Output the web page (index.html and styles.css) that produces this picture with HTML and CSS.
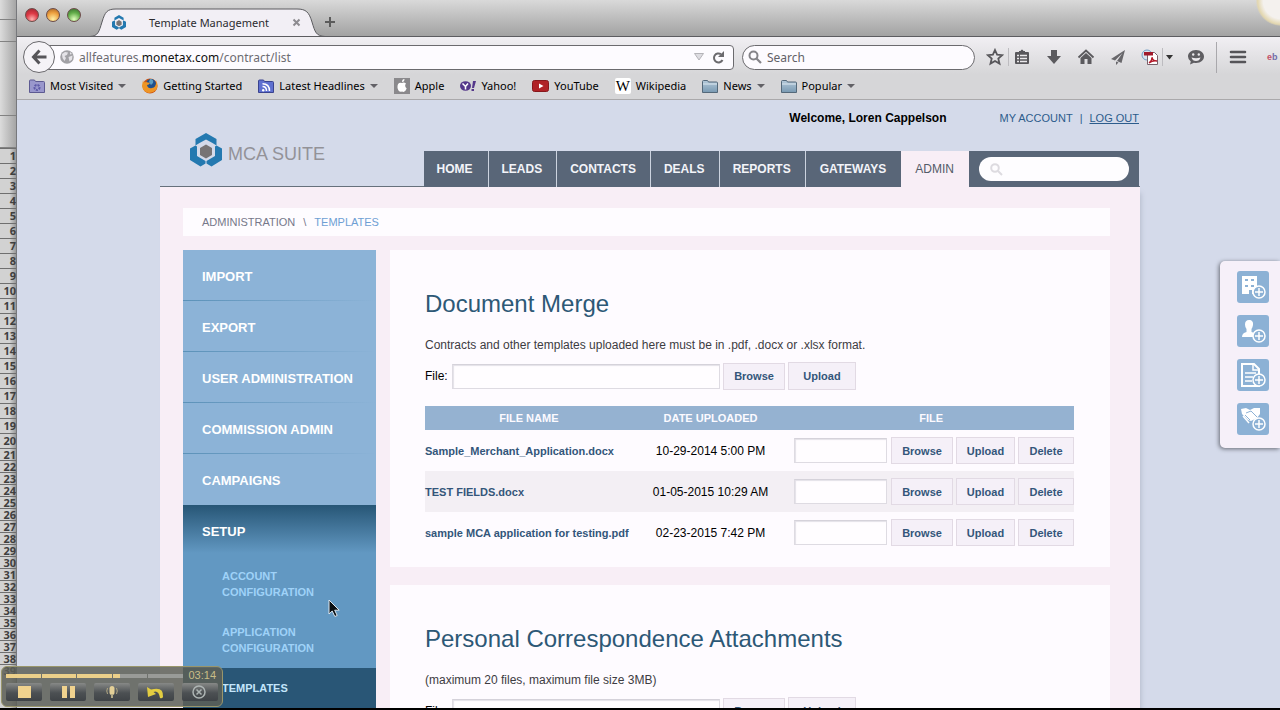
FILE: index.html
```
<!DOCTYPE html>
<html lang="en">
<head>
<meta charset="utf-8">
<title>Template Management</title>
<link rel="stylesheet" href="styles.css">
</head>
<body>
<svg class="defs" width="0" height="0" aria-hidden="true">
  <defs>
    <linearGradient id="folderFill" x1="0" y1="0" x2="0" y2="1"><stop offset="0" stop-color="#b4c9d9"/><stop offset="1" stop-color="#7899b2"/></linearGradient>
    <symbol id="logo" viewBox="0 0 32 34">
      <path fill="#2479b0" d="M16 0 26.500 6v6.500L22.500 10 16 6.500 9.500 10 5.500 12.500V6z"/>
      <path fill="#2479b0" d="M5.500 12.500 7 13.500V23l8.500 5v2.500L10.500 33.500 0 27V15.500z"/>
      <path fill="#2479b0" d="M26.500 12.500 25 13.500V23l-8.500 5v2.500L21.500 33.500 32 27V15.500z"/>
      <path fill="#777475" d="M16 11.500 22 15v7l-6 3.500L10 22v-7z"/>
    </symbol>
    <symbol id="folder" viewBox="0 0 16 15"><path d="M.5 13.500V2.500q0-1 1-1h4l1 1.500h8q1 0 1 1v9.500z" fill="url(#folderFill)" stroke="#54697a"/><path d="M1 5h14" stroke="#dbe7ef"/></symbol>
    <symbol id="plus" viewBox="0 0 14 14"><circle cx="7" cy="7" r="6" fill="#8cb1d5" stroke="#fff" stroke-width="1.500"/><path d="M7 3v8M3 7h8" stroke="#fff" stroke-width="1.500"/></symbol>
  </defs>
</svg>
<div class="screen">
  <aside class="sheet" aria-hidden="true">
    <div class="sheet-top"><i></i><i></i><i></i><i></i></div>
    <ol class="rows"><li>1</li><li>2</li><li>3</li><li>4</li><li>5</li><li>6</li><li>7</li><li>8</li><li>9</li><li>10</li><li>11</li><li>12</li><li>13</li><li>14</li><li>15</li><li>16</li><li>17</li><li>18</li><li>19</li><li>20</li></ol>
    <ol class="rows tight"><li>21</li><li>22</li><li>23</li><li>24</li><li>25</li><li>26</li><li>27</li><li>28</li><li>29</li><li>30</li><li>31</li><li>32</li><li>33</li><li>34</li><li>35</li><li>36</li><li>37</li><li>38</li><li>39</li></ol>
  </aside>

  <div class="window">
    <div class="tabstrip">
      <div class="lights"><button class="light red" aria-label="Close window"></button><button class="light amber" aria-label="Minimize"></button><button class="light green" aria-label="Zoom"></button></div>
      <div class="tab">
        <svg class="tab-shape" viewBox="0 0 235 29" preserveAspectRatio="none"><path d="M0 28.500C8 28 9 24 12 14S17 1 26 1H207c9 0 12 3 15 13s4 14 13 14.500z" fill="#f2eff5" stroke="#5c5c60"/></svg>
        <svg class="tab-icon" width="14" height="15"><use href="#logo"/></svg>
        <span class="tab-title">Template Management</span>
        <button class="icon tab-close" aria-label="Close tab"><svg width="9" height="9" viewBox="0 0 9 9"><path d="M1.500 1.500l6 6M7.500 1.500l-6 6" stroke="#8d8b90" stroke-width="2"/></svg></button>
      </div>
      <button class="icon" aria-label="New tab"><svg width="12" height="12" viewBox="0 0 12 12"><path d="M6 1v10M1 6h10" stroke="#5c5c5c" stroke-width="2"/></svg></button>
      <span class="orb"></span>
    </div>

    <div class="chrome">
      <div class="toolbar">
        <button class="icon back" aria-label="Back"><svg width="16" height="16" viewBox="0 0 16 16" fill="none" stroke="#565559" stroke-width="3"><path d="M8.500 1.500 2.500 8l6 6.500M3 8h12.500"/></svg></button>
        <div class="url">
          <svg width="14" height="14" viewBox="0 0 14 14"><circle cx="7" cy="7" r="6.800" fill="#a2a1a6"/><path d="M2 4l3-2 3 .5L7 5 4.500 6 6 8l-1.500 3-2-3zM8.500 7l4-1.500-.5 4-2.500 2zM10 2l2 2-2 .5z" fill="#e5e3e8"/></svg>
          <span class="address" role="textbox" aria-label="Address">allfeatures.<b>monetax.com</b>/contract/list</span>
          <svg width="10" height="8" viewBox="0 0 10 8"><path d="M.5.5h9L5 7z" fill="#dddce1" stroke="#b4b3b8"/></svg>
          <button class="icon" aria-label="Reload"><svg width="13" height="13" viewBox="0 0 13 13"><path d="M10.500 9A4.500 4.500 0 1 1 9 3.200" fill="none" stroke="#6b6a6e" stroke-width="2"/><path d="M12 0v6H6z" fill="#6b6a6e"/></svg></button>
        </div>
        <label class="find"><svg width="14" height="14" viewBox="0 0 14 14" fill="none" stroke="#858489" stroke-width="2"><circle cx="5.500" cy="5.500" r="4"/><path d="M8.500 8.500l4.500 4.500" stroke-width="2.200"/></svg><input type="search" placeholder="Search" aria-label="Search the web"></label>
        <div class="tools">
          <span class="pair"><button class="icon" aria-label="Bookmark"><svg width="18" height="18" viewBox="0 0 18 18"><path d="M9 2l2.100 4.700 5.100.5-3.900 3.400 1.200 5L9 13l-4.500 2.600 1.200-5-3.900-3.400 5.100-.5z" fill="none" stroke="#58575b" stroke-width="1.800"/></svg></button>
          <i class="rule"></i>
          <button class="icon" aria-label="Bookmarks list"><svg width="18" height="18" viewBox="0 0 18 18"><path d="M3 4h12q1 0 1 1v10q0 1-1 1H3q-1 0-1-1V5q0-1 1-1z" fill="#58575b"/><path d="M6 5V3h1.500Q9 0 10.500 3H12v2z" fill="#58575b"/><path d="M4 7.500h2M4 10.500h2M4 13.500h2M7 7.500h7M7 10.500h7M7 13.500h7" stroke="#ebe9ec" stroke-width="1.700"/></svg></button></span>
          <button class="icon" aria-label="Downloads"><svg width="18" height="18" viewBox="0 0 18 18"><path d="M6 2h6v6h4l-7 8-7-8h4z" fill="#5b5a5e"/></svg></button>
          <button class="icon" aria-label="Home"><svg width="18" height="18" viewBox="0 0 18 18"><path d="M1.500 9.500 9 2.500l7.500 7" fill="none" stroke="#5b5a5e" stroke-width="1.800"/><path d="M9 5l5.500 5v6h-4v-5h-3v5h-4v-6z" fill="#5b5a5e"/></svg></button>
          <button class="icon" aria-label="Share"><svg width="18" height="18" viewBox="0 0 18 18"><path d="M16 2 2 11l4 1.500L13.500 5 8 13l4.500 2zM7 13.500V17l2.500-2.500z" fill="#68676b"/></svg></button>
          <span class="pair tightpair"><button class="icon" aria-label="Convert to PDF"><svg width="18" height="18" viewBox="0 0 18 18"><circle cx="6" cy="7" r="5" fill="#d9e3ee" stroke="#6f9cc6"/><path d="M6.500 4.500h7l3 3v9h-10z" fill="#fff" stroke="#77606a"/><path d="M3 4h9v3.500H3z" fill="#a01a2c"/><path d="M8 15q3.500-3 3-6 .5 4 5 4-4-1-8 2z" fill="none" stroke="#b3192a" stroke-width="1.300"/></svg></button>
          <i class="rule"></i>
          <button class="icon" aria-label="PDF options"><svg width="7" height="5" viewBox="0 0 7 5"><path d="M0 0h7L3.500 4.500z" fill="#333"/></svg></button></span>
          <button class="icon" aria-label="Chat"><svg width="18" height="18" viewBox="0 0 18 18"><path d="M9 2c5 0 8 3 8 6.500S14 15 9 15q-1 0-2-.2L3 16.500l.8-3Q1 11.500 1 8.500C1 5 4 2 9 2z" fill="#5f5e62"/><circle cx="6.200" cy="6.500" r="1.200" fill="#eceaed"/><circle cx="11.800" cy="6.500" r="1.200" fill="#eceaed"/><path d="M4.500 9.500q4.500 1.500 9 0-1 3.500-4.500 3.500t-4.500-3.500z" fill="#eceaed"/></svg></button>
          <button class="icon menu" aria-label="Menu"><svg width="18" height="14" viewBox="0 0 18 14"><path d="M2 2h14M2 7h14M2 12h14" stroke="#565559" stroke-width="2.600" stroke-linecap="round"/></svg></button>
          <span class="ebay"><span>e</span>b</span>
        </div>
      </div>
      <nav class="bookmarks" aria-label="Bookmarks">
        <a href="#"><svg width="16" height="15" viewBox="0 0 16 15"><path d="M.5 13.500V2q0-1 1-1h4l1 1.500h8q1 0 1 1v10z" fill="#9997cc" stroke="#5d5a92"/><circle cx="8" cy="8.500" r="2.500" fill="none" stroke="#5e5aa8" stroke-width="2" stroke-dasharray="2 1"/></svg>Most Visited<i class="caret"></i></a>
        <a href="#"><svg width="16" height="16" viewBox="0 0 16 16"><circle cx="8" cy="8" r="7.500" fill="#cd5312"/><circle cx="9" cy="6" r="5" fill="#20518d"/><path d="M8 1q4 0 3 4l-2 2-2-3z" fill="#5c9ec2"/><path d="M1 2q0 3 3 2l4 1q-1 2-3 2 1 4 5 3 5-1 4-8 3 6 0 10-3 3-7 3-6-1-7-7z" fill="#ee9525"/></svg>Getting Started</a>
        <a href="#"><svg width="16" height="15" viewBox="0 0 16 15"><path d="M.5 13.500V2q0-1 1-1h4l1 1.500h8q1 0 1 1v10z" fill="#5f70d0" stroke="#3a438f"/><path d="M4.500 7.500q4 0 4 4.500M4.500 4.700q7 0 7 7.300" fill="none" stroke="#fff" stroke-width="1.500"/><circle cx="5.200" cy="11.200" r="1.200" fill="#fff"/></svg>Latest Headlines<i class="caret"></i></a>
        <a href="#"><svg width="16" height="16" viewBox="0 0 16 16"><path d="M0 0h16v16H0z" fill="#8a898c"/><path d="M8 5q2-1 4 .5-2 2.500.7 5Q11 15 8 13.500 5 15 3.500 10 3 4 8 5zM8 4q0-3 2.500-3Q10.500 4 8 4z" fill="#fff"/></svg>Apple</a>
        <a href="#"><svg width="16" height="12" viewBox="0 0 16 12"><ellipse cx="5.500" cy="6" rx="5.500" ry="4.800" fill="#54378a"/><path d="M2.500 3.500l3 3 2.500-3M5.500 6V9.500" fill="none" stroke="#fff" stroke-width="1.500"/><path d="M13 1h3l-2 7h-2zM11.500 9H14v2h-2.500z" fill="#54378a"/></svg>Yahoo!</a>
        <a href="#"><svg width="17" height="12" viewBox="0 0 17 12"><rect x=".5" y=".5" width="16" height="11" rx="2" fill="#b02226" stroke="#86181c"/><path d="M7 3.500v5L11.500 6z" fill="#fff"/></svg>YouTube</a>
        <a href="#"><span class="w">W</span>Wikipedia</a>
        <a href="#"><svg width="16" height="15"><use href="#folder"/></svg>News<i class="caret"></i></a>
        <a href="#"><svg width="16" height="15"><use href="#folder"/></svg>Popular<i class="caret"></i></a>
      </nav>
    </div>

    <div class="page">
      <div class="site">
        <header class="site-head">
          <a class="brand" href="#"><svg width="32" height="34"><use href="#logo"/></svg><span>MCA SUITE</span></a>
          <div class="head-right">
            <div class="user"><strong>Welcome, Loren Cappelson</strong><a href="#">MY ACCOUNT</a><span>|</span><a class="out" href="#">LOG OUT</a></div>
            <nav class="main-nav" aria-label="Main">
              <a class="wide" href="#">HOME</a><a href="#">LEADS</a><a href="#">CONTACTS</a><a href="#">DEALS</a><a href="#">REPORTS</a><a class="last" href="#">GATEWAYS</a><a class="active" href="#">ADMIN</a>
              <div class="nav-search"><label><svg width="13" height="13" viewBox="0 0 13 13" fill="none" stroke="#dddbe0" stroke-width="2"><circle cx="5" cy="5" r="3.800"/><path d="M8 8l4 4"/></svg><input type="text" aria-label="Search site"></label></div>
            </nav>
          </div>
        </header>
        <div class="body">
          <nav class="crumbs" aria-label="Breadcrumb"><a href="#">ADMINISTRATION</a><span>\</span><a class="here" href="#">TEMPLATES</a></nav>
          <div class="columns">
            <nav class="side" aria-label="Administration">
              <a class="top" href="#">IMPORT</a>
              <a class="top" href="#">EXPORT</a>
              <a class="top" href="#">USER ADMINISTRATION</a>
              <a class="top" href="#">COMMISSION ADMIN</a>
              <a class="top" href="#">CAMPAIGNS</a>
              <div class="setup">
                <a class="top" href="#">SETUP</a>
                <a class="sub" href="#">ACCOUNT<br>CONFIGURATION</a>
                <a class="sub" href="#">APPLICATION<br>CONFIGURATION</a>
                <a class="sub current" href="#">TEMPLATES</a>
              </div>
            </nav>
            <main class="panels">
              <section class="panel">
                <h1>Document Merge</h1>
                <p>Contracts and other templates uploaded here must be in .pdf, .docx or .xlsx format.</p>
                <form class="upload"><label for="f1">File:</label><input id="f1" type="text"><button type="button">Browse</button><button class="send" type="button">Upload</button></form>
                <table>
                  <colgroup><col class="c-name"><col class="c-date"><col class="c-file"></colgroup>
                  <thead><tr><th>FILE NAME</th><th>DATE UPLOADED</th><th>FILE</th></tr></thead>
                  <tbody>
                    <tr><td><a href="#">Sample_Merchant_Application.docx</a></td><td class="date">10-29-2014 5:00 PM</td><td><div class="actions"><input type="text" aria-label="Replacement file 1"><button>Browse</button><button>Upload</button><button>Delete</button></div></td></tr>
                    <tr><td><a href="#">TEST FIELDS.docx</a></td><td class="date">01-05-2015 10:29 AM</td><td><div class="actions"><input type="text" aria-label="Replacement file 2"><button>Browse</button><button>Upload</button><button>Delete</button></div></td></tr>
                    <tr><td><a href="#">sample MCA application for testing.pdf</a></td><td class="date">02-23-2015 7:42 PM</td><td><div class="actions"><input type="text" aria-label="Replacement file 3"><button>Browse</button><button>Upload</button><button>Delete</button></div></td></tr>
                  </tbody>
                </table>
              </section>
              <section class="panel">
                <h1>Personal Correspondence Attachments</h1>
                <p>(maximum 20 files, maximum file size 3MB)</p>
                <form class="upload"><label for="f2">File:</label><input id="f2" type="text"><button type="button">Browse</button><button class="send" type="button">Upload</button></form>
              </section>
            </main>
          </div>
        </div>
      </div>
    </div>

    <div class="quick">
      <button aria-label="Add company"><svg width="32" height="32" viewBox="0 0 32 32"><path d="M5 5h15v18h-5v-4h-3v4H5z" fill="#fff"/><path d="M8 9h3M14 9h3M8 15h3M14 15h3" stroke="#8cb1d5" stroke-width="2"/><use href="#plus" x="15" y="14" width="14" height="14"/></svg></button>
      <button aria-label="Add contact"><svg width="32" height="32" viewBox="0 0 32 32"><path d="M12 5c3 0 4.500 2 4 5-.3 2-1 3-1.500 4v3q5 1 6 5H5q0-4 4.500-5v-3Q8 12 8 9.500 8 5 12 5z" fill="#fff"/><use href="#plus" x="15" y="14" width="14" height="14"/></svg></button>
      <button aria-label="Add document"><svg width="32" height="32" viewBox="0 0 32 32" fill="none" stroke="#fff"><path d="M5 5h12l5 5v17H5z" stroke-width="2"/><path d="M16 5v6h6" stroke-width="1.500"/><path d="M8 14h11M8 18h8M8 22h7" stroke-width="1.500"/><use href="#plus" x="15" y="14" width="14" height="14"/></svg></button>
      <button aria-label="Add deal"><svg width="32" height="32" viewBox="0 0 32 32"><path d="M4 6l5-1 4 2 4-2h6v6l-3 4-6 3-3-1-6-6z" fill="#fff"/><path d="M9 10l5-2 6 6M8 12l5 5M6 13l5 5" fill="none" stroke="#8cb1d5"/><path d="M6 13l6 7" stroke="#fff" stroke-width="1.500"/><use href="#plus" x="15" y="14" width="14" height="14"/></svg></button>
    </div>
  </div>
</div>
<svg class="pointer" width="13" height="20" viewBox="0 0 13 20"><path d="M1 1v14l3.200-3 2.600 5.500 2.400-1L6.700 11.200h4.500z" fill="#0b1014" stroke="#dde6ee"/></svg>
<div class="recorder">
  <div class="meter"><div class="track"><i class="on"></i><i class="on"></i><i class="on"></i><i class="part"></i><i></i></div><time>03:14</time></div>
  <div class="keys">
    <button aria-label="Stop"><svg width="36" height="18" viewBox="0 0 36 18"><path d="M12 3h13v12H12z" fill="#f0d28e"/></svg></button>
    <button aria-label="Pause"><svg width="36" height="18" viewBox="0 0 36 18"><path d="M12 3h5v12h-5zM20 3h5v12h-5z" fill="#f0d28e"/></svg></button>
    <button aria-label="Microphone"><svg width="36" height="18" viewBox="0 0 36 18" fill="none" stroke="#b3a985"><rect x="15.500" y="3" width="5" height="9" rx="2.500" fill="#e3cf97" stroke="none"/><path d="M18 11v4" stroke-width="2"/><path d="M13.500 5q-1.500 3 0 6M22.500 5q1.500 3 0 6"/></svg></button>
    <button aria-label="Undo"><svg width="36" height="18" viewBox="0 0 36 18"><path d="M9 4l1 10 8-3-2.500-2q5-2 6.500 6 2 1 3-1Q26 3 13 6.500z" fill="#e3cd41"/></svg></button>
    <button aria-label="Cancel"><svg width="36" height="18" viewBox="0 0 36 18" fill="none" stroke="#aeb5b4" stroke-width="1.500"><circle cx="17" cy="9" r="6"/><path d="M14.500 6.500l5 5M19.500 6.500l-5 5"/></svg></button>
  </div>
</div>
</body>
</html>
```
FILE: styles.css
```
* { box-sizing: border-box; }
body { margin: 0; height: 100vh; overflow: hidden; background: #000; font-family: "Liberation Sans", Arial, sans-serif; font-size: 12px; color: #000; }
a { color: inherit; text-decoration: none; }
button, input { font: inherit; margin: 0; padding: 0; }
svg { display: block; flex: none; }
.defs { position: absolute; }
.icon { display: flex; align-items: center; justify-content: center; border: 0; background: none; flex: none; }

.screen { display: flex; height: calc(100vh - 2px); overflow: hidden; }
.sheet { flex: none; width: 17px; overflow: hidden; background: linear-gradient(90deg, #d2d2d2 60%, #979797); border-right: 1px solid #77787c; }
.sheet-top { height: 148px; display: grid; grid-template-rows: 20px 22px 74px 32px; }
.sheet-top i { border-bottom: 1px solid #828282; background: linear-gradient(90deg, #dcdcdc, #a5a5a5); }
.rows { list-style: none; margin: 0; padding: 0; font: bold 11px/14px "Noto Sans", sans-serif; color: #3f3f3f; text-align: right; }
.rows li { height: 15px; border-top: 1px solid #6f6f6f; white-space: nowrap; }
.rows.tight li { height: 12px; line-height: 11px; }

.window { position: relative; flex: 1; min-width: 0; display: flex; flex-direction: column; }
.tabstrip { position: relative; display: flex; align-items: center; height: 37px; flex: none; overflow: hidden; padding: 8px 0 0 8px; background: linear-gradient(#d9d9d9, #a2a2a2); border-bottom: 1px solid #5c5c60; font-family: "Noto Sans", sans-serif; }
.lights { display: flex; gap: 7px; width: 65px; align-self: flex-start; }
.light { width: 14px; height: 14px; border-radius: 50%; border: 1px solid #6b4b48; }
.red { background: radial-gradient(circle at 50% 85%, #ffb3b0, #dd3945 50%, #9b2530); }
.amber { background: radial-gradient(circle at 50% 85%, #fff0a5, #eda03f 55%, #a55f22); }
.green { background: radial-gradient(circle at 50% 85%, #e1ffbd, #62ad49 55%, #356a2c); }
.tab { position: relative; display: flex; align-items: center; width: 235px; height: 29px; padding: 0 24px 0 22px; margin-right: -1px; }
.tab-shape { position: absolute; left: 0; top: 0; width: 100%; height: 100%; }
.tab-icon, .tab-title, .tab-close { position: relative; }
.tab-title { flex: 1; text-align: center; font-size: 11px; color: #2c2b2f; }
.orb { position: absolute; right: -26px; top: -24px; width: 50px; height: 50px; border-radius: 50%; background: radial-gradient(circle, #f4f1ee 50%, #e3d7b0 66%, #d9d1ae00 72%); }

.chrome { flex: none; height: 63px; background: linear-gradient(#f1eff3, #d6d6d8 60%); border-bottom: 1px solid #aaa9ab; font-family: "Noto Sans", sans-serif; overflow: hidden; }
.toolbar { display: flex; align-items: center; height: 40px; padding-left: 6px; }
.back { position: relative; width: 32px; height: 32px; border: 1px solid #69686c; border-radius: 50%; background: #f5f3f7; margin-right: -16px; }
.url { flex: 1; min-width: 0; display: flex; align-items: center; gap: 5px; height: 25px; padding: 0 8px 0 20px; background: #fdfbff; border: 1px solid #6b6a6e; border-radius: 4px; color: #6d6c72; }
.url .icon { margin-left: 3px; }
.address { flex: 1; }
.address b { font-weight: 400; color: #111; }
.find { flex: none; display: flex; align-items: center; gap: 5px; width: 233px; height: 25px; margin-left: 8px; padding: 0 5px; background: #fdfbff; border: 1px solid #6b6a6e; border-radius: 13px; }
.find input { flex: 1; min-width: 0; border: 0; background: none; outline: 0; }
.find input::placeholder { color: #626167; opacity: 1; }
.tools { flex: none; display: flex; align-items: center; gap: 14px; width: 305px; padding-left: 11px; overflow: hidden; }
.pair { display: flex; align-items: center; gap: 4px; }
.tightpair { gap: 3px; }
.rule { width: 1px; height: 18px; background: #bdbcc0; }
.menu { border-left: 1px solid #a9a8ac; height: 31px; padding-left: 12px; margin-left: -3px; }
.ebay { font: bold 9px/12px "Liberation Sans", sans-serif; color: #6f6da8; margin-left: 6px; }
.ebay span { color: #c4526a; }
.bookmarks { display: flex; gap: 16px; align-items: center; height: 18px; padding-left: 12px; font-size: 11px; white-space: nowrap; }
.bookmarks a { display: flex; align-items: center; gap: 5px; line-height: 16px; }
.caret { border: 4px solid transparent; border-top: 4px solid #626166; border-bottom: 0; }
.w { width: 16px; height: 16px; background: #fff; border-radius: 2px; font: 15px/16px "Liberation Serif", serif; text-align: center; }

.page { flex: 1; min-height: 0; overflow: hidden; background: #d4daea; padding-left: 3px; display: flex; flex-direction: column; }
.site { flex: 1; width: 100%; max-width: 980px; margin: 0 auto; display: flex; flex-direction: column; }
.site-head { display: flex; justify-content: space-between; height: 87px; flex: none; border-bottom: 1px solid #66707c; }
.brand { display: flex; align-items: center; gap: 6px; padding: 14px 0 0 30px; font-size: 18px; color: #939298; }
.brand span { padding-top: 8px; }
.head-right { display: flex; flex-direction: column; justify-content: space-between; margin-right: 1px; margin-bottom: -1px; }
.user { display: flex; justify-content: flex-end; padding-top: 10px; line-height: 16px; font-size: 11px; color: #2c5c8c; }
.user strong { font-size: 12px; color: #000; margin-right: 53px; }
.user span { margin: 0 7px; }
.out { text-decoration: underline; }
.main-nav { display: flex; height: 36px; line-height: 36px; background: #596678; color: #f3f4f9; font-weight: 700; }
.main-nav a { padding: 0 14px 0 13px; border-right: 1px solid #ccd3df; }
.main-nav .wide { padding-right: 15px; }
.main-nav .last { border: 0; padding: 0 15px 0 14px; }
.main-nav .active { padding: 0 15px 0 14px; background: #f8eef6; color: #535b68; font-weight: 400; border: 0; }
.nav-search { width: 170px; padding: 6px 10px; }
.nav-search label { display: flex; align-items: center; height: 24px; padding: 0 11px; background: #fefdff; border-radius: 12px; }
.nav-search input { flex: 1; min-width: 0; border: 0; background: none; outline: 0; }
.body { flex: 1 0 auto; padding: 21px 30px 0 23px; background: #f8eef6; box-shadow: 3px 4px 5px -2px #b4bbcc; }
.crumbs { display: flex; height: 28px; align-items: center; padding-left: 19px; background: #fefcff; color: #76788a; font-size: 11px; }
.crumbs span { margin: 0 8px; }
.here { color: #6f9fd4; }
.columns { display: flex; gap: 14px; margin-top: 14px; }

.side { flex: none; width: 193px; font-weight: 700; background: #8cb3d7; color: #fff; align-self: flex-start; }
.top { display: block; height: 51px; padding-left: 19px; font-size: 13px; line-height: 54px; background: linear-gradient(90deg, #5c92b9, #8cb3d7) bottom / 100% 1px no-repeat; }
.top:nth-child(5) { background: none; }
.setup { background: linear-gradient(#275676, #6298c2 48px); }
.setup .top { background: none; }
.sub { display: block; padding: 12px 10px 12px 39px; font-size: 11px; line-height: 16px; color: #9fd2f8; }
.current { background: #295676; color: #c3e5fb; }

.panels { flex: 1; min-width: 0; display: flex; flex-direction: column; gap: 18px; }
.panel { padding: 38px 36px 14px 35px; background: #fefbff; }
.panel h1 { margin: 0; font-size: 24px; line-height: 32px; font-weight: 400; color: #2d5876; }
.panel p { margin: 16px 0 8px; line-height: 18px; color: #3d3c42; }
.upload { display: flex; align-items: center; height: 28px; gap: 3px; margin-bottom: 16px; }
.upload label { width: 24px; white-space: nowrap; }
.upload input { width: 268px; height: 25px; }
.upload .send { height: 28px; width: 68px; }
.panel input { border: 1px solid #dedbe2; border-top-color: #d5d2da; background: #fffdff; box-shadow: inset 1px 1px 1px #e4e1e8; }
.panel button { height: 27px; width: 62px; border: 1px solid #e2dae4; background: #f5f0f8; color: #33567a; font-weight: 700; font-size: 11px; }
table { width: 100%; table-layout: fixed; border-collapse: collapse; }
.c-name { width: 32%; }
.c-date { width: 24%; }
th { height: 24px; padding: 0; font-size: 11px; background: #95b2d1; color: #fcfaff; }
td { height: 41px; padding: 0; }
tbody tr:nth-child(even) { background: #f3eff4; }
td a { color: #33567a; font-weight: 700; font-size: 11px; white-space: nowrap; }
.date { text-align: center; }
.actions { display: flex; justify-content: flex-end; align-items: center; gap: 3px; }
.actions input { width: 93px; height: 25px; margin-right: 1px; }
.actions button:nth-child(3) { width: 59px; }
.panel .actions button:last-child { width: 56px; }

.quick { position: absolute; right: 0; top: 261px; width: 60px; padding: 10px 0 13px 17px; display: flex; flex-direction: column; gap: 12px; background: #f6f0f9; border-radius: 5px 0 0 5px; box-shadow: -1px 1px 4px #666a74; }
.quick button { width: 32px; height: 32px; border: 0; border-radius: 3px; background: #8cb1d5; }
.pointer { position: absolute; left: 328px; top: 599px; }
.recorder { position: absolute; left: 1px; bottom: 3px; width: 222px; padding: 3px 4px; background: #5d5f57d9; border: 1px solid #99966b; border-radius: 6px; }
.meter { display: flex; align-items: center; gap: 6px; height: 11px; padding-right: 2px; color: #c9bd87; font-size: 11px; line-height: 11px; }
.track { flex: 1; display: flex; gap: 1px; height: 4px; }
.track i { flex: 1; background: #999b98; }
.track .on { background: #ecd08a; }
.track .part { background: linear-gradient(90deg, #ecd08a 22%, #999b98 22%); }
.keys { display: flex; justify-content: space-between; padding: 2px 0; }
.keys button { width: 36px; height: 18px; border: 0; border-radius: 2px; background: linear-gradient(#878987, #4c5053 55%, #3f4347); }
```
